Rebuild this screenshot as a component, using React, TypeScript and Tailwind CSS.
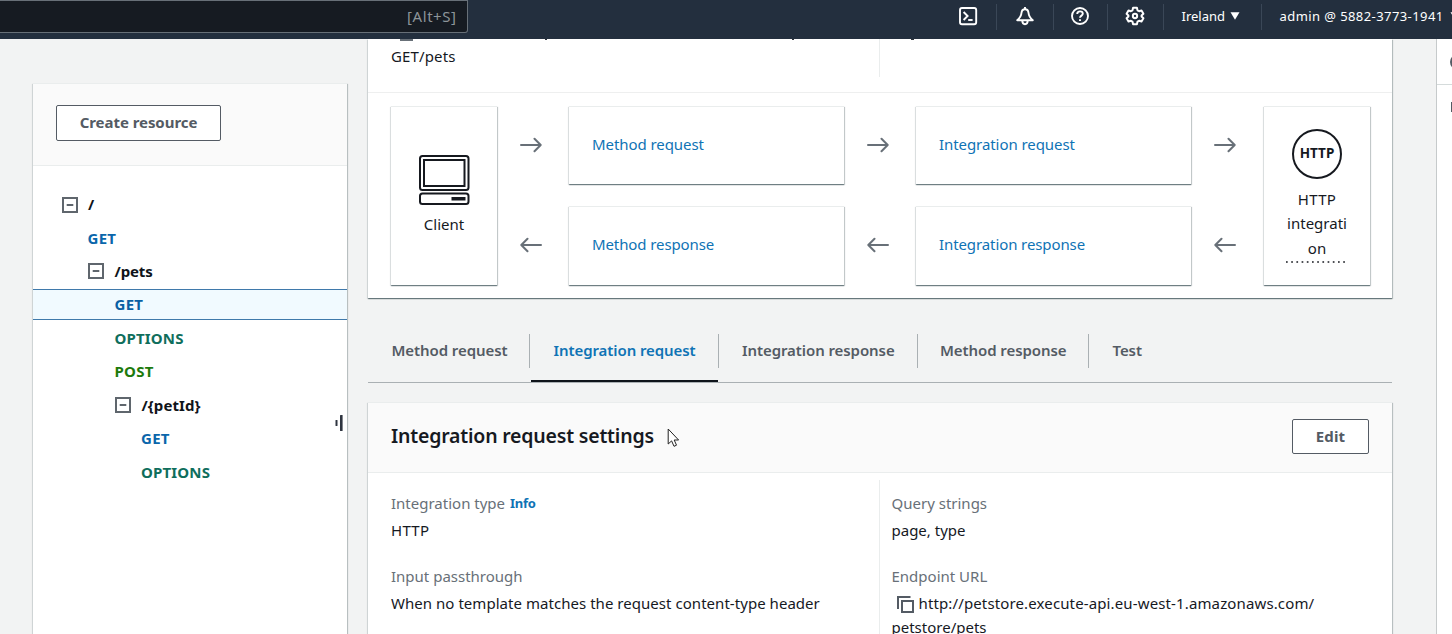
import type { ReactNode } from 'react'

const card =
  'bg-white shadow-[0_1px_1px_0_rgba(0,28,36,0.42),1px_1px_1px_0_rgba(0,28,36,0.18),-1px_1px_1px_0_rgba(0,28,36,0.08)] border-t border-[#eaeded]'

function Separator() {
  return <div className="h-[26px] w-px shrink-0 bg-[#3a4757]" />
}

function TopBar() {
  return (
    <header className="relative z-10 flex h-[39px] w-full shrink-0 bg-[#232f3e] text-[13px] text-white">
      <div className="flex h-[33px] w-[467.500px] shrink-0 items-center justify-end rounded-br-[3px] border border-l-0 border-[#687078] bg-[#161b22] pr-[10px]">
        <span className="text-[15px] tracking-[0.55px] text-[#8d9499]">[Alt+S]</span>
      </div>
      <div className="flex h-[33px] flex-1 items-center">
        <div className="ml-[472.500px] flex w-[56px] items-center justify-center pb-[1px] pl-[2px]">
          <svg width="20" height="20" viewBox="0 0 20 20" fill="none" stroke="#fff" strokeWidth="1.9" className="mr-[2px]">
            <rect x="2" y="2" width="16.200" height="16.200" rx="2" />
            <path d="M5.600 6 L9.600 10 L5.600 14" />
            <path d="M10.200 14 H14.600" />
          </svg>
        </div>
        <Separator />
        <div className="flex w-[56px] items-center justify-center pr-[1px] pb-[1px]">
          <svg width="20" height="20" viewBox="0 0 20 20" fill="none" stroke="#fff" strokeWidth="1.9" strokeLinejoin="round">
            <path d="M10 1 V4" />
            <path d="M10 3.200 C7.900 3.200 6.700 4.700 6.500 6.800 C6.300 9.800 5.600 11.500 2.200 14.200 H17.800 C14.400 11.500 13.700 9.800 13.500 6.800 C13.300 4.700 12.100 3.200 10 3.200 Z" />
            <path d="M7.300 14.600 C7.300 17.200 8.400 18.200 10 18.200 C11.600 18.200 12.700 17.200 12.700 14.600" />
          </svg>
        </div>
        <Separator />
        <div className="flex w-[53px] items-center justify-center pr-[1px] pb-[1px]">
          <svg width="20" height="20" viewBox="0 0 20 20" fill="none" stroke="#fff" strokeWidth="1.9">
            <circle cx="10" cy="10" r="8" />
            <path d="M7.200 8.100 C7.200 6.400 8.300 5.400 10 5.400 C11.700 5.400 12.800 6.400 12.800 7.800 C12.800 9.600 10 9.700 10 11.800" />
            <path d="M10 13.200 V15" />
          </svg>
        </div>
        <Separator />
        <div className="flex w-[55px] items-center justify-center pr-[1px] pb-[1px]">
          <svg width="20" height="20" viewBox="0 0 24 24" fill="none" stroke="#fff" strokeWidth="2.400" strokeLinejoin="round">
            <path d="M9.700 2.200 h4.600 l0.700 3 l1.900 1.100 l2.900 -0.900 l2.300 4 l-2.200 2.100 v1 l2.200 2.100 l-2.300 4 l-2.900 -0.900 l-1.900 1.100 l-0.700 3 h-4.600 l-0.700 -3 l-1.900 -1.100 l-2.900 0.900 l-2.300 -4 l2.200 -2.100 v-1 l-2.200 -2.100 l2.300 -4 l2.900 0.900 l1.900 -1.100 z" />
            <circle cx="12" cy="12" r="2.600" />
          </svg>
        </div>
        <Separator />
        <div className="flex w-[97px] items-center pl-[17.500px]">
          <span>Ireland</span>
          <svg width="10" height="8" viewBox="0 0 10 8" className="mb-[2px] ml-[5px]">
            <path d="M0.500 0.300 H9.500 L5 7.800 Z" fill="#fff" />
          </svg>
        </div>
        <Separator />
        <div className="flex items-center pl-[17.500px]">
          <span className="whitespace-nowrap tracking-[0.420px]">admin @ 5882-3773-1941</span>
          <svg width="10" height="8" viewBox="0 0 10 8" className="mb-[2px] ml-[6px] shrink-0">
            <path d="M0.500 0.300 H9.500 L5 7.800 Z" fill="#fff" />
          </svg>
        </div>
      </div>
    </header>
  )
}

function Collapse() {
  return (
    <svg width="16" height="16" viewBox="0 0 16 16" fill="none" stroke="#5f666d" strokeWidth="2" className="mr-[10.500px] shrink-0">
      <rect x="1" y="1" width="14" height="14" />
      <path d="M4.700 8 H11.300" />
    </svg>
  )
}

function Row({ indent, children }: { indent: string; children: ReactNode }) {
  return <div className={`flex h-[33.4px] items-center ${indent}`}>{children}</div>
}

function Sidebar() {
  return (
    <aside className={`relative mt-[44px] ml-[33px] h-[700px] w-[313.5px] shrink-0 ${card}`}>
      <div className="flex h-[82px] items-start border-b border-[#eaeded] bg-[#fafafa] pt-[21px] pl-[23px]">
        <button className="h-[36px] w-[165px] rounded-[2px] border border-[#545b64] bg-white pb-[2px] text-[15px] font-bold tracking-[-0.05px] text-[#545b64]">
          Create resource
        </button>
      </div>
      <div className="pt-[22px] text-[15px] font-bold text-[#0f141a]">
        <Row indent="pl-[28.5px]"><Collapse />/</Row>
        <Row indent="pl-[54.5px]"><span className="tracking-[0.3px] text-[#0a66ab]">GET</span></Row>
        <Row indent="pl-[55px]"><Collapse /><span className="tracking-[-0.1px]">/pets</span></Row>
        <Row indent="">
          <div className="flex h-[31px] w-full items-center border-y border-[#3f79ab] bg-[#f1faff] pb-[1px] pl-[81.5px]">
            <span className="tracking-[0.3px] text-[#0a5fa3]">GET</span>
          </div>
        </Row>
        <Row indent="pl-[81.5px]"><span className="tracking-[0.15px] text-[#0f6e5c]">OPTIONS</span></Row>
        <Row indent="pl-[81.5px]"><span className="tracking-[0.3px] text-[#1d7a0c]">POST</span></Row>
        <Row indent="pl-[82px]"><Collapse /><span className="tracking-[0.1px]">/{'{petId}'}</span></Row>
        <Row indent="pl-[108px]"><span className="tracking-[0.3px] text-[#0a66ab]">GET</span></Row>
        <Row indent="pl-[108px]"><span className="tracking-[0.15px] text-[#0f6e5c]">OPTIONS</span></Row>
      </div>
      <svg width="8" height="16" viewBox="0 0 8 16" className="absolute top-[331px] right-[4px]">
        <rect x="0.5" y="5" width="2" height="6" rx="0.5" fill="#2f3540" />
        <rect x="5" y="0" width="2.6" height="16" rx="0.5" fill="#2f3540" />
      </svg>
    </aside>
  )
}

function Arrow({ left }: { left?: boolean }) {
  return (
    <div className="flex h-[78.5px] items-center justify-center pr-[6px]">
      <svg width="22" height="16" viewBox="0 0 22 16" fill="none" stroke="#687078" strokeWidth="2" strokeLinejoin="round" strokeLinecap="round">
        {left ? <path d="M21 8 H1.500 M7.500 1.800 L1.300 8 L7.500 14.200" /> : <path d="M1 8 H20.500 M14.500 1.800 L20.700 8 L14.500 14.200" />}
      </svg>
    </div>
  )
}

function ArrowPair() {
  return (
    <div className="flex flex-col gap-[22px]">
      <Arrow />
      <Arrow left />
    </div>
  )
}

function StepPair({ top, bottom }: { top: string; bottom: string }) {
  return (
    <div className="mr-[1px] flex flex-col gap-[22px] text-[#0f73b5]">
      <div className={`flex h-[78.5px] items-center pb-[2px] pl-[23px] tracking-[-0.07px] ${card}`}>{top}</div>
      <div className={`flex h-[78.5px] items-center pb-[3px] pl-[23px] tracking-[-0.1px] ${card}`}>{bottom}</div>
    </div>
  )
}

function Diagram() {
  return (
    <div className="grid h-[205.5px] grid-cols-[107px_71px_276px_71px_276px_72px_107px] border-t border-[#eeefef] pt-[13px] pl-[23px]">
      <div className={`mr-[1px] flex h-[179px] flex-col items-center pt-[48px] ${card}`}>
        <svg width="52" height="50" viewBox="0 0 52 50" fill="none" stroke="#16191f" strokeWidth="2">
          <rect x="2" y="1" width="48.5" height="34" rx="2.5" />
          <rect x="6" y="5" width="40.5" height="26" />
          <rect x="2" y="38.500" width="48.5" height="10.500" rx="2.5" />
          <rect x="33.500" y="42" width="14" height="3.500" fill="#16191f" stroke="none" />
        </svg>
        <div className="mt-[7px] leading-[24px]">Client</div>
      </div>
      <ArrowPair />
      <StepPair top="Method request" bottom="Method response" />
      <ArrowPair />
      <StepPair top="Integration request" bottom="Integration response" />
      <ArrowPair />
      <div className={`mr-[1px] flex h-[179px] flex-col items-center pt-[22px] ${card}`}>
        <div className="flex size-[50px] items-center justify-center rounded-full border-2 border-[#16191f] text-[13.500px] font-bold">
          HTTP
        </div>
        <div className="mt-[8.500px] w-[62px] text-center leading-[24.3px]">
          <span className="tracking-[0.3px]">HTTP</span>
          <br />
          integrati
          <br />
          on
        </div>
        <svg width="62" height="2" viewBox="0 0 62 2" className="mt-[1px]">
          <path d="M0 1 H62" stroke="#16191f" strokeWidth="1.3" strokeDasharray="1.7 3.5" />
        </svg>
      </div>
    </div>
  )
}

function MethodExecution() {
  return (
    <section className="relative h-[258.500px] w-[1024px] shrink-0 bg-white shadow-[0_1px_1px_0_rgba(0,28,36,0.42),1px_1px_1px_0_rgba(0,28,36,0.2),-1px_1px_1px_0_rgba(0,28,36,0.08)]">
      <div className="absolute top-0 left-[32px] h-[2px] w-[13px] bg-[#687078]" />
      <div className="absolute top-0 left-[177px] h-px w-[2px] bg-[#30363d]" />
      <div className="absolute top-0 left-[424px] h-px w-[2px] bg-[#30363d]" />
      <div className="absolute top-0 left-[543px] h-px w-[3px] bg-[#30363d]" />
      <div className="flex h-[52.500px]">
        <div className="h-[38px] w-[512px] border-r border-[#eaeded] pt-[5px] pl-[23px] leading-[24px] tracking-[0.13px]">
          GET/pets
        </div>
      </div>
      <Diagram />
    </section>
  )
}

function Tabs() {
  return (
    <nav className="mt-[27.500px] flex h-[57.500px] w-[1024px] shrink-0 items-start border-b border-[#aab0b3] pt-[9px] text-[15px] font-semibold tracking-[-0.08px] text-[#545b64]">
      <div className="flex h-[34px] w-[162px] items-center border-r border-[#aab0b3] pb-[1px] pl-[23.5px]">Method request</div>
      <div className="flex h-[48.500px] w-[188.500px] flex-col pl-[1px]">
        <div className="flex h-[34px] items-center border-r border-[#aab0b3] pb-[1px] pl-[22.5px] text-[#0f73b5]">Integration request</div>
        <div className="mt-[12px] mr-px h-[2px] bg-[#0f141a]" />
      </div>
      <div className="flex h-[34px] w-[199px] items-center border-r border-[#aab0b3] pb-[1px] pl-[23.5px]">Integration response</div>
      <div className="flex h-[34px] w-[171.500px] items-center border-r border-[#aab0b3] pb-[1px] pl-[22.5px]">Method response</div>
      <div className="flex h-[34px] items-center pb-[1px] pl-[23.500px]">Test</div>
    </nav>
  )
}

function Field({ label, info, children }: { label: string; info?: boolean; children: ReactNode }) {
  return (
    <div className="mb-[22px] leading-[24.700px]">
      <div className="flex h-[25px] items-center text-[#687078]">
        {label}
        {info && <span className="ml-[5px] text-[13px] font-bold tracking-[-0.28px] text-[#0f73b5]">Info</span>}
      </div>
      <div className="mt-[1.5px]">{children}</div>
    </div>
  )
}

function Settings() {
  return (
    <section className={`mt-[19px] h-[300px] w-[1024px] shrink-0 ${card}`}>
      <div className="flex h-[70px] items-center justify-between border-b border-[#eaeded] bg-[#fafafa] pr-[23px] pb-[2px] pl-[23px]">
        <h2 className="pb-[1px] text-[19.5px] font-semibold tracking-[-0.2px]">Integration request settings</h2>
        <button className="h-[35px] w-[77px] rounded-[2px] border border-[#545b64] bg-white font-bold tracking-[0.2px] text-[#545b64]">
          Edit
        </button>
      </div>
      <div className="flex h-[220px] pt-[7px]">
        <div className="w-[511px] pt-[11.500px] pl-[23px]">
          <Field label="Integration type" info>
            <span className="tracking-[0.3px]">HTTP</span>
          </Field>
          <Field label="Input passthrough">
            <span className="tracking-[0.04px]">When no template matches the request content-type header</span>
          </Field>
        </div>
        <div className="border-l border-[#eaeded] pt-[11.500px] pl-[11.500px]">
          <Field label="Query strings">page, type</Field>
          <Field label="Endpoint URL">
            <svg width="17" height="17" viewBox="0 0 17 17" fill="none" stroke="#545b64" strokeWidth="2" className="mr-[5px] ml-[5px] inline-block align-[-4px]">
              <path d="M1 13 V1 H13.500" />
              <rect x="5" y="5" width="11" height="11" />
            </svg>
            <span className="tracking-[0.13px]">http://petstore.execute-api.eu-west-1.amazonaws.com/</span>
            <br />
            petstore/pets
          </Field>
        </div>
      </div>
    </section>
  )
}

function HelpRail() {
  return (
    <aside className="relative ml-[43.500px] h-full w-[17px] shrink-0 overflow-hidden border-l border-[#c6cacb] bg-white">
      <div className="h-[45.500px] border-b border-[#d5dbdb]" />
      <div className="absolute top-[15px] left-[13px] size-[16px] rounded-full border-2 border-[#545b64]" />
      <div className="absolute top-[63px] left-[14px] h-[10px] w-[2px] bg-[#545b64]" />
    </aside>
  )
}

export default function App() {
  return (
    <div className="flex h-[634px] w-[1452px] flex-col overflow-hidden bg-[#f2f3f3] font-['Noto_Sans',sans-serif] text-[15px] text-[#16191f]">
      <TopBar />
      <div className="flex min-h-0 flex-1">
        <Sidebar />
        <main className="ml-[21.500px] flex w-[1024px] shrink-0 flex-col">
          <MethodExecution />
          <Tabs />
          <Settings />
        </main>
        <HelpRail />
      </div>
      <svg width="13" height="20" viewBox="0 0 13 20" className="absolute top-[428px] left-[667px]">
        <path d="M1.200 1 V16 L4.600 12.900 L7 18.300 L9.500 17.200 L7.200 12 H11.600 Z" fill="#fff" stroke="#222" strokeWidth="1" />
      </svg>
    </div>
  )
}
